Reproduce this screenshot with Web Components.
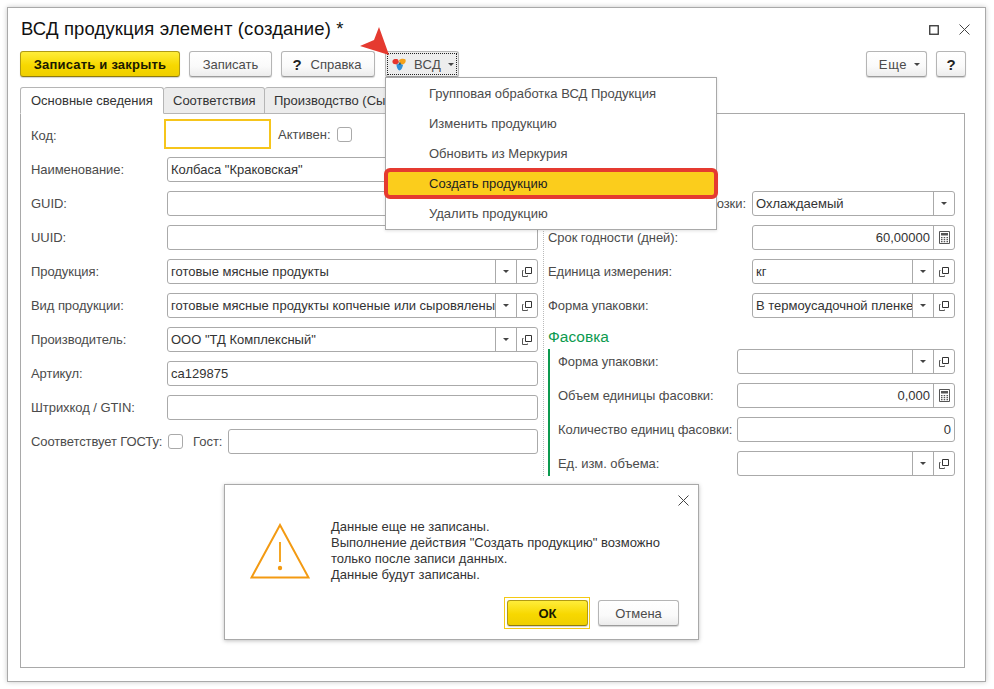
<!DOCTYPE html>
<html lang="ru">
<head>
<meta charset="utf-8">
<title>ВСД продукция</title>
<style>
  html, body { margin: 0; height: 100%; background: #fff; }
  body { font: 13px "Liberation Sans", Arial, sans-serif; color: #333; overflow: hidden; }
</style>
</head>
<body>
<vsd-window title-text="ВСД продукция элемент (создание) *">
  <tool-button slot="tools" kind="primary" style="width:160px;letter-spacing:.2px">Записать и закрыть</tool-button>
  <tool-button slot="tools" style="width:83px">Записать</tool-button>
  <tool-button slot="tools" help style="width:94px">Справка</tool-button>
  <tool-button slot="tools" kind="focus" drop logo style="width:74px;margin-left:1px;letter-spacing:.3px">ВСД</tool-button>
  <tool-button slot="tools-end" drop style="width:61px;letter-spacing:.6px"><span style="margin-left:6px">Еще</span></tool-button>
  <tool-button slot="tools-end" style="width:30px"><b style="color:#222;font-weight:700;font-size:15px">?</b></tool-button>

  <tab-item slot="tabs" active style="width:144px">Основные сведения</tab-item>
  <tab-item slot="tabs" style="width:101px">Соответствия</tab-item>
  <tab-item slot="tabs" style="width:170px">Производство (Сырье)</tab-item>

  <form-page slot="page">
    <div slot="left">
      <form-field label="Код:" width="136" tall>
        <div style="display:flex;align-items:center;margin-left:-3px">
          <text-box focused style="width:107px"></text-box>
          <span style="margin-left:7px;color:#4b4b4b">Активен:</span>
          <check-box style="margin-left:6px"></check-box>
        </div>
      </form-field>
      <form-field label="Наименование:" width="136"><text-box value='Колбаса "Краковская"'></text-box></form-field>
      <form-field label="GUID:" width="136"><text-box></text-box></form-field>
      <form-field label="UUID:" width="136"><text-box></text-box></form-field>
      <form-field label="Продукция:" width="136"><text-box value="готовые мясные продукты" drop open></text-box></form-field>
      <form-field label="Вид продукции:" width="136"><text-box value="готовые мясные продукты копченые или сыровялены" drop open></text-box></form-field>
      <form-field label="Производитель:" width="136"><text-box value='ООО "ТД Комплексный"' drop open></text-box></form-field>
      <form-field label="Артикул:" width="136"><text-box value="са129875"></text-box></form-field>
      <form-field label="Штрихкод / GTIN:" width="136"><text-box></text-box></form-field>
      <form-field label="Соответствует ГОСТу:" width="136" tight>
        <div style="display:flex;align-items:center">
          <check-box style="margin-left:1px"></check-box>
          <span style="margin-left:10px;margin-right:6px;color:#4b4b4b">Гост:</span>
          <text-box style="flex:1"></text-box>
        </div>
      </form-field>
    </div>
    <div slot="right">
      <form-field label="Режим перевозки:" width="204" end><text-box value="Охлаждаемый" drop></text-box></form-field>
      <form-field label="Срок годности (дней):" width="204"><text-box value="60,00000" num calc></text-box></form-field>
      <form-field label="Единица измерения:" width="204"><text-box value="кг" drop open></text-box></form-field>
      <form-field label="Форма упаковки:" width="204"><text-box value="В термоусадочной пленке" drop open></text-box></form-field>
      <form-group heading="Фасовка">
        <form-field label="Форма упаковки:" width="179"><text-box drop open></text-box></form-field>
        <form-field label="Объем единицы фасовки:" width="179"><text-box value="0,000" num calc></text-box></form-field>
        <form-field label="Количество единиц фасовки:" width="179"><text-box value="0" num></text-box></form-field>
        <form-field label="Ед. изм. объема:" width="179"><text-box drop open></text-box></form-field>
      </form-group>
    </div>
  </form-page>

  <popup-menu slot="over">
    <menu-row>Групповая обработка ВСД Продукция</menu-row>
    <menu-row>Изменить продукцию</menu-row>
    <menu-row>Обновить из Меркурия</menu-row>
    <menu-row selected>Создать продукцию</menu-row>
    <menu-row>Удалить продукцию</menu-row>
  </popup-menu>

  <svg slot="over" style="position:absolute;left:353px;top:20px;z-index:6" width="40" height="38" viewBox="0 0 40 38">
    <!-- red pointer over the button -->
    <polygon points="7,26 21,20 26,7 36,35" fill="#e53a30"/>
  </svg>

  <warn-dialog slot="over">
    <div>Данные еще не записаны.</div>
    <div>Выполнение действия "Создать продукцию" возможно</div>
    <div>только после записи данных.</div>
    <div>Данные будут записаны.</div>
    <tool-button slot="buttons" kind="primary" ring style="width:81px">ОК</tool-button>
    <tool-button slot="buttons" style="width:81px">Отмена</tool-button>
  </warn-dialog>
</vsd-window>

<script>
// общий базовый класс: разметка и стили в shadow root
class Base extends HTMLElement {
  connectedCallback() {
    if (this.shadowRoot) return;
    this.attachShadow({ mode: 'open' });
    this.shadowRoot.innerHTML = this.render();
  }
}

const attr = (el, name) => (el.getAttribute(name) || '').replace(/"/g, '&quot;');

const ICON_DROP = `<svg width="6" height="3" viewBox="0 0 6 3"><path d="M0 0h6L3 3z" fill="#444"/></svg>`;
const ICON_OPEN = `<svg width="10" height="10" viewBox="0 0 10 10" fill="none" stroke="#333"><path d="M3.500.5h6v6h-6z"/><path d="M1.500 3.500h-1v6h5v-1" stroke="#555"/></svg>`;
const ICON_CALC = `<svg width="11" height="13" viewBox="0 0 11 13"><path d="M.5.5h10v12H.5z" fill="#fff" stroke="#555"/><path d="M2 2h7v2.500H2z" fill="#555"/><path d="M2 6h1.500v1.200H2zM4.700 6h1.500v1.200H4.700zM7.500 6H9v1.200H7.500zM2 8h1.500v1.200H2zM4.700 8h1.500v1.200H4.700zM7.500 8H9v1.200H7.500zM2 10h1.500v1.200H2zM4.700 10h1.500v1.200H4.700zM7.500 10H9v1.200H7.500z" fill="#555"/></svg>`;
const ICON_LOGO = `<svg width="14" height="13" viewBox="0 0 14 13"><path d="M.5 3C1 1 4 .5 6 1.500L7 4 5 6.500 2 6C.8 5.500.2 4.200.5 3z" fill="#e8352e"/><path d="M7 2c2-1.500 5-1.800 6.500-.5.700 2-.5 4-2.500 5L8 6z" fill="#f4a11a"/><path d="M4.500 6.500 8 5.500l3 1.500c-.5 2.500-1.500 5-3.500 5.500C5.500 12 4.500 9 4.500 6.500z" fill="#2f8fd8"/><path d="M6.500 4.500h2L9 6.500 7 7z" fill="#2d5f6e"/></svg>`;

class VsdWindow extends Base {
  render() {
    return /* html */ `
      <style>
        :host { display: block; position: relative; width: 100%; height: 689px; }
        .win {
          position: absolute; inset: 7px 8px 7px 7px; box-sizing: border-box;
          background: #fff; border: 1px solid #a9a9a9;
          box-shadow: 0 0 5px rgba(0,0,0,.22);
          padding: 0 19px 13px 12px; display: flex; flex-direction: column;
        }
        .head { height: 43px; display: flex; align-items: center; flex: none; }
        h1 { margin: 0 0 1px 1px; font: 400 18.500px "Liberation Sans", Arial, sans-serif; letter-spacing: .14px; color: #111; flex: 1; }
        .ctl { display: flex; gap: 20px; align-items: center; margin-right: -4px; }
        .tools { display: flex; gap: 9px; height: 26px; flex: none; }
        .tools slot[name=tools] { display: flex; gap: 9px; }
        .end { margin-left: auto; display: flex; gap: 9px; }
        .tabs { display: flex; margin-top: 10px; height: 27px; flex: none; position: relative; z-index: 1; }
        .page { flex: 1; min-height: 0; border: 1px solid #a9a9a9; margin-top: -1px; margin-right: 1px; }
      </style>
      <div class="win">
        <div class="head">
          <h1>${attr(this, 'title-text')}</h1>
          <div class="ctl">
            <svg width="10" height="10" viewBox="0 0 10 10"><rect x=".75" y=".75" width="8.500" height="8.500" fill="none" stroke="#333" stroke-width="1.300"/></svg>
            <svg width="11" height="11" viewBox="0 0 11 11"><path d="M.5.5l10 10M10.500.5l-10 10" stroke="#444" fill="none"/></svg>
          </div>
        </div>
        <div class="tools">
          <slot name="tools"></slot>
          <div class="end"><slot name="tools-end"></slot></div>
        </div>
        <div class="tabs"><slot name="tabs"></slot></div>
        <div class="page"><slot name="page"></slot></div>
      </div>
      <slot name="over"></slot>
    `;
  }
}

class ToolButton extends Base {
  render() {
    const primary = this.getAttribute('kind') === 'primary';
    const focus = this.getAttribute('kind') === 'focus';
    return /* html */ `
      <style>
        :host { display: block; position: relative; height: 26px; box-sizing: border-box; flex: none; }
        .b {
          height: 100%; box-sizing: border-box; display: flex; align-items: center; justify-content: center;
          border: 1px solid ${primary ? '#b09a14' : '#b5b5b5'};
          border-bottom-color: ${primary ? '#8f7c10' : '#9c9c9c'};
          border-radius: 3px;
          background: ${primary ? 'linear-gradient(#ffed3a,#f7d800 55%,#efcf00)' : focus ? '#ededed' : 'linear-gradient(#fff,#fafafa 60%,#ececec)'};
          box-shadow: 0 1px 1px rgba(0,0,0,.18);
          color: ${primary ? '#1a1a00' : '#4b4b4b'};
          font-weight: ${primary ? 700 : 400};
          white-space: nowrap;
        }
        .dots { position: absolute; inset: 2px; border: 1px dotted #222; pointer-events: none; }
        .ring { position: absolute; inset: -3px -2px -3px -3px; border: 1px solid #f4c914; pointer-events: none; }
        .q { color: #222; font-weight: 700; font-size: 15px; margin-right: 9px; }
        .logo { margin-right: 8px; margin-left: 2px; display: flex; }
        .d { margin-left: 7px; display: flex; }
      </style>
      <div class="b" ${this.hasAttribute('help') ? 'style="padding-right:2px"' : ''}>
        ${this.hasAttribute('help') ? '<span class="q">?</span>' : ''}
        ${this.hasAttribute('logo') ? `<span class="logo">${ICON_LOGO}</span>` : ''}
        <slot></slot>
        ${this.hasAttribute('drop') ? `<span class="d">${ICON_DROP}</span>` : ''}
      </div>
      ${focus ? '<div class="dots"></div>' : ''}
      ${this.hasAttribute('ring') ? '<div class="ring"></div>' : ''}
    `;
  }
}

class TabItem extends Base {
  render() {
    const on = this.hasAttribute('active');
    return /* html */ `
      <style>
        :host {
          display: flex; align-items: center; box-sizing: border-box; padding-left: ${on ? 10 : 9}px;
          border: 1px solid #b5b5b5; border-left-width: ${on ? 1 : 0}px;
          border-radius: 3px 3px 0 0;
          background: ${on ? '#fff' : '#ececec'};
          ${on ? 'border-bottom-color: #fff;' : ''}
          color: #333; white-space: nowrap; overflow: hidden;
        }
      </style>
      <slot></slot>
    `;
  }
}

class FormPage extends Base {
  render() {
    return /* html */ `
      <style>
        :host { display: grid; grid-template-columns: 507px 417px; height: 100%; padding: 5px 0 0 10px; box-sizing: border-box; }
        .right { border-left: 1px dotted #bbb; margin-left: 5px; padding-left: 4px; margin-top: 72px; height: 285px; }
      </style>
      <div class="left"><slot name="left"></slot></div>
      <div class="right"><slot name="right"></slot></div>
    `;
  }
}

class FormField extends Base {
  render() {
    const w = this.getAttribute('width');
    const tall = this.hasAttribute('tall');
    return /* html */ `
      <style>
        :host { display: flex; align-items: center; height: ${tall ? 30 : 25}px; margin-bottom: ${tall ? 8 : 9}px; }
        .l {
          flex: none; width: ${w}px; color: #4b4b4b; white-space: nowrap; letter-spacing: ${this.hasAttribute('tight') ? '-.1px' : '-.06px'};
          ${tall ? 'padding-top: 2px;' : ''}
          ${this.hasAttribute('end') ? 'text-align: right; padding-right: 6px; box-sizing: border-box;' : ''}
        }
        .c { flex: 1; min-width: 0; }
      </style>
      <div class="l">${attr(this, 'label')}</div>
      <div class="c"><slot></slot></div>
    `;
  }
}

class FormGroup extends Base {
  render() {
    return /* html */ `
      <style>
        :host { display: block; }
        h2 { margin: -1px 0 2px; font: 400 15.500px/21px "Liberation Sans", Arial, sans-serif; color: #0c9a4f; }
        .g { border-left: 2px solid #0c9a4f; padding-left: 8px; }
        ::slotted(:last-child) { margin-bottom: 0; }
      </style>
      <h2>${attr(this, 'heading')}</h2>
      <div class="g"><slot></slot></div>
    `;
  }
}

class TextBox extends Base {
  render() {
    const focused = this.hasAttribute('focused');
    const num = this.hasAttribute('num');
    const btn = (icon) => `<span class="btn">${icon}</span>`;
    return /* html */ `
      <style>
        :host { display: block; }
        .box {
          display: flex; box-sizing: border-box; height: ${focused ? 30 : 25}px;
          border: ${focused ? '2px solid #f6c51b' : '1px solid #aaa'};
          border-radius: ${focused ? 0 : 3}px; background: #fff;
        }
        .v {
          flex: 1; min-width: 0; line-height: 23px; padding: 0 3px; color: #333;
          white-space: nowrap; overflow: hidden;
          text-align: ${num ? 'right' : 'left'};
        }
        .btn { flex: none; width: 20px; border-left: 1px solid #aaa; display: flex; align-items: center; justify-content: center; }
      </style>
      <div class="box">
        <div class="v">${attr(this, 'value')}</div>
        ${this.hasAttribute('drop') ? btn(ICON_DROP) : ''}
        ${this.hasAttribute('open') ? btn(ICON_OPEN) : ''}
        ${this.hasAttribute('calc') ? btn(ICON_CALC) : ''}
      </div>
    `;
  }
}

class CheckBox extends Base {
  render() {
    return `<style>:host { display: block; flex: none; width: 15px; height: 15px; box-sizing: border-box; border: 1px solid #aaa; border-radius: 3px; background: #fff; }</style>`;
  }
}

class PopupMenu extends Base {
  render() {
    return /* html */ `
      <style>
        :host {
          position: absolute; z-index: 5; left: 385px; top: 77px; width: 332px; height: 153px; box-sizing: border-box;
          background: #fff; border: 1px solid #a9a9a9; box-shadow: 0 1px 3px rgba(0,0,0,.12);
          display: block;
        }
      </style>
      <slot></slot>
    `;
  }
}

class MenuRow extends Base {
  render() {
    const sel = this.hasAttribute('selected');
    return /* html */ `
      <style>
        :host {
          display: flex; align-items: center; height: 30px; padding-left: 43px; box-sizing: border-box;
          position: relative; color: ${sel ? '#222' : '#4b4b4b'};
          white-space: nowrap;
        }
        .sel {
          position: absolute; left: -2px; right: -2px; top: 0; bottom: -1px;
          background: #fbcd1c; border: 4px solid #e53a30; border-radius: 6px; box-sizing: border-box;
        }
        span { position: relative; }
      </style>
      ${sel ? '<div class="sel"></div>' : ''}
      <span><slot></slot></span>
    `;
  }
}

class WarnDialog extends Base {
  render() {
    return /* html */ `
      <style>
        :host {
          position: absolute; z-index: 5; left: 224px; top: 484px; width: 475px; height: 156px; box-sizing: border-box;
          background: #fff; border: 1px solid #a9a9a9; box-shadow: 0 1px 4px rgba(0,0,0,.25);
          display: block;
        }
        .x { position: absolute; right: 9px; top: 10px; }
        .body { display: flex; padding: 34px 0 0 25px; }
        .tri { flex: none; margin-right: 21px; margin-top: 4px; }
        .msg { line-height: 16px; color: #333; white-space: nowrap; }
        .btns { position: absolute; right: 19px; top: 115px; display: flex; gap: 10px; }
      </style>
      <svg class="x" width="11" height="11" viewBox="0 0 11 11"><path d="M.5.5l10 10M10.500.5l-10 10" stroke="#444" fill="none"/></svg>
      <div class="body">
        <svg class="tri" width="60" height="56" viewBox="0 0 60 56" fill="none">
          <path d="M30 2 58.500 54.500H1.500z" stroke="#f39a12" stroke-width="2"/>
          <path d="M30 19v20" stroke="#f5a623" stroke-width="2"/>
          <circle cx="30" cy="45" r="2.200" fill="#f39a12"/>
        </svg>
        <div class="msg"><slot></slot></div>
      </div>
      <div class="btns"><slot name="buttons"></slot></div>
    `;
  }
}

customElements.define('vsd-window', VsdWindow);
customElements.define('tool-button', ToolButton);
customElements.define('tab-item', TabItem);
customElements.define('form-page', FormPage);
customElements.define('form-field', FormField);
customElements.define('form-group', FormGroup);
customElements.define('text-box', TextBox);
customElements.define('check-box', CheckBox);
customElements.define('popup-menu', PopupMenu);
customElements.define('menu-row', MenuRow);
customElements.define('warn-dialog', WarnDialog);
</script>
</body>
</html>
